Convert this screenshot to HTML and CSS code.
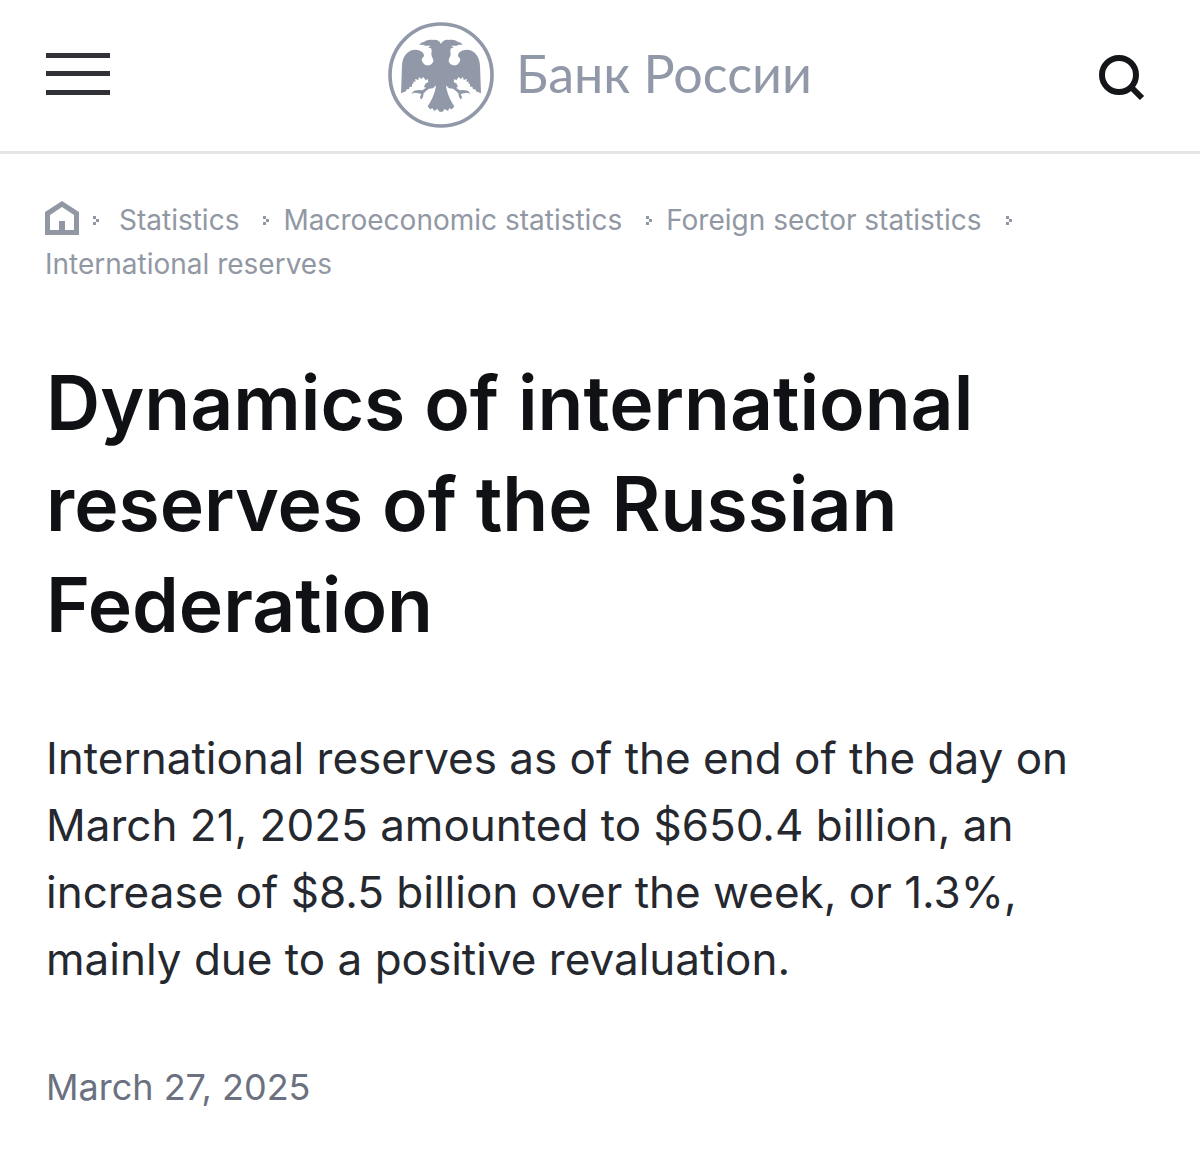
FILE: index.html
```html
<!DOCTYPE html>
<html lang="en">
<head>
  <meta charset="UTF-8" />
  <meta name="viewport" content="width=device-width, initial-scale=1.0" />
  <title>Dynamics of international reserves of the Russian Federation</title>
  <link rel="stylesheet" href="styles.css">
</head>
<body>
  <header class="header">
    <button class="icon-button" type="button" aria-label="Menu">
      <svg width="64" height="44" viewBox="0 0 64 44" fill="#303237" aria-hidden="true">
        <path d="M0 0h64v5H0zM0 18h64v5H0zM0 37h64v5H0z" />
      </svg>
    </button>
    <a class="logo" href="#">
      <svg width="106" height="106" viewBox="24 22 318 318" aria-hidden="true">
        <defs>
          <path id="eagle-half" d="M184 90 C180 80 170 74 160 76 C148 73 136 77 132 82 C126 82 121 85 118 91 C126 89 132 90 136 93 L152 93 L145 99 L153 101 C157 108 154 113 154 118 C154 127 161 132 160 140 C158 148 149 154 139 152 C132 150 128 144 126 138 C123 134 128 128 132 125 C134 116 124 106 106 105 C82 105 67 126 66 153 L63 236 L78 230 L80 224 L87 224 L89 216 L96 216 L96 208 L102 206 L98 201 L107 201 L105 193 L115 196 L117 187 L124 193 L130 187 L137 197 L143 193 L145 202 L136 207 L132 217 L138 219 L127 227 L117 226 L102 228 L94 238 L103 234 L115 236 L124 238 L120 248 L123 255 L129 247 L131 236 L139 228 L147 222 L159 221 L168 212 C166 233 155 258 143 275 L150 284 L158 281 L162 289 L172 283 L178 291 L184 291 Z" />
        </defs>
        <circle cx="183" cy="181" r="153" fill="none" stroke="#9198a8" stroke-width="11" />
        <g fill="#9198a8">
          <use href="#eagle-half" />
          <use href="#eagle-half" transform="matrix(-1 0 0 1 366 0)" />
        </g>
      </svg>
      <span class="logo-text" lang="ru">Банк России</span>
    </a>
    <button class="icon-button search" type="button" aria-label="Search">
      <svg width="46" height="46" viewBox="0 0 46 46" fill="none" stroke="#141619" stroke-width="6" aria-hidden="true">
        <circle cx="20" cy="20" r="17" />
        <path d="M32 32l11 11" />
      </svg>
    </button>
  </header>

  <main class="content">
    <svg class="sprite" aria-hidden="true">
      <symbol id="sep" viewBox="0 0 6 9">
        <path d="M0 0h3v3H0zM3 3h3v3H3zM0 6h3v3H0z" />
      </symbol>
    </svg>

    <nav class="breadcrumbs" aria-label="Breadcrumbs">
      <a class="home" href="#" aria-label="Home">
        <svg width="34" height="34" viewBox="0 0 34 34" aria-hidden="true">
          <path fill-rule="evenodd" d="M0 11L17 0l17 11v23H0zM5 14v15h9V20h6v9h9V14L17 6z" />
        </svg>
      </a>
      <svg class="sep sep-home" aria-hidden="true"><use href="#sep" /></svg>
      <a href="#">Statistics</a>
      <svg class="sep" aria-hidden="true"><use href="#sep" /></svg>
      <a href="#">Macroeconomic statistics</a>
      <svg class="sep" aria-hidden="true"><use href="#sep" /></svg>
      <a href="#">Foreign sector statistics</a>
      <svg class="sep" aria-hidden="true"><use href="#sep" /></svg>
      <span>International reserves</span>
    </nav>

    <h1 class="title">Dynamics of international reserves of the Russian Federation</h1>
    <p class="lead">International reserves as of the end of the day on March 21, 2025 amounted to $650.4 billion, an increase of $8.5 billion over the week, or 1.3%, mainly due to a positive revaluation.</p>
    <time class="date" datetime="2025-03-27">March 27, 2025</time>
  </main>
</body>
</html>
```

FILE: styles.css
```css
* {
  box-sizing: border-box;
}

body {
  margin: 0;
  background: #fff;
  color: #25282f;
  font-family: Inter, "Liberation Sans", sans-serif;
}

a {
  color: inherit;
  text-decoration: none;
}

.header {
  display: grid;
  grid-template-columns: 1fr auto 1fr;
  align-items: center;
  padding: 22px 46px 23px;
  border-bottom: 3px solid #e6e6e8;
}

.icon-button {
  display: block;
  padding: 0;
  border: none;
  background: none;
  cursor: pointer;
}

.icon-button svg {
  display: block;
}

.search {
  justify-self: end;
  padding: 6px 9px 0 0;
}

.logo {
  display: flex;
  align-items: center;
  gap: 22px;
  color: #9198a8;
}

.logo-text {
  padding-bottom: 4px;
  font-family: Lato, sans-serif;
  font-size: 52px;
  line-height: 60px;
}

.content {
  padding: 44px 46px;
}

.sprite {
  display: none;
}

.breadcrumbs {
  display: flex;
  flex-wrap: wrap;
  align-items: center;
  margin-left: -1px;
  color: #9198a3;
  fill: #9198a3;
  font-size: 28px;
  line-height: 44px;
}

.home {
  padding-bottom: 4px;
}

.home svg {
  display: block;
}

.sep {
  width: 6px;
  height: 9px;
  margin: 0 14px 0 24px;
}

.sep-home {
  margin: 0 20px 0 14px;
}

.title {
  margin: 66px 0 0;
  color: #0f1114;
  font-size: 75px;
  font-weight: 600;
  line-height: 101px;
}

.lead {
  margin: 70px 0 0;
  padding-right: 40px;
  font-size: 44px;
  line-height: 67px;
}

.date {
  display: block;
  margin-top: 64px;
  color: #6b7180;
  font-size: 36px;
  line-height: 60px;
}
```
